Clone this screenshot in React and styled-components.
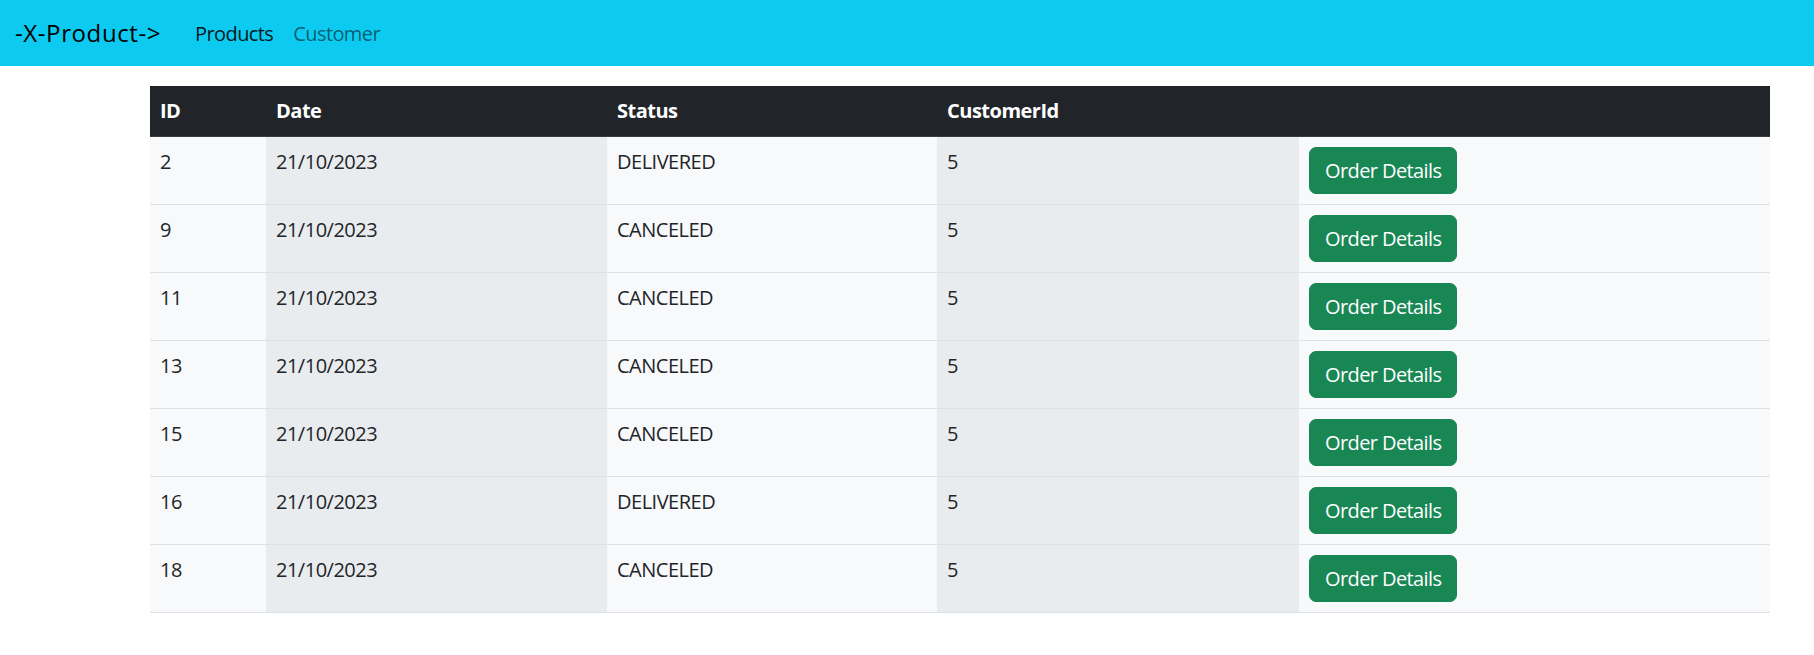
import styled, { createGlobalStyle } from "styled-components";

const GlobalStyle = createGlobalStyle`
  body {
    margin: 0;
    font-family: "Open Sans", "Liberation Sans", sans-serif;
    color: #212529;
    background: #fff;
  }
`;

const NavBar = styled.nav`
  display: flex;
  align-items: center;
  height: 66px;
  padding: 0 15px;
  background: #0dcaf0;
`;

const Brand = styled.a`
  font-size: 24px;
  letter-spacing: 0.6px;
  color: #000;
  margin-right: 24px;
  margin-top: -2px;
  text-decoration: none;
`;

const NavLink = styled.a`
  padding: 0 10px;
  font-size: 20px;
  letter-spacing: -0.6px;
  text-decoration: none;
  color: ${(p) => (p.$active ? "rgba(0, 0, 0, 0.9)" : "rgba(0, 0, 0, 0.55)")};
`;

const Main = styled.main`
  padding: 20px 44px 0 150px;
`;

const Table = styled.table`
  width: 1620px;
  border-collapse: collapse;
  table-layout: fixed;
  font-size: 20px;
  line-height: 30px;
  letter-spacing: -0.5px;
`;

const HeadCell = styled.th`
  background: #212529;
  color: #fff;
  text-align: left;
  font-weight: 700;
  padding: 10px;
  border-bottom: 1px solid #373b3e;
`;

const Row = styled.tr`
  border-bottom: 1px solid #dee2e6;
`;

const Cell = styled.td`
  padding: 10px;
  vertical-align: top;
  background: ${(p) => (p.$dark ? "#e9ecef" : "#f8f9fa")};
`;

const DetailsButton = styled.button`
  font-family: inherit;
  font-size: 20px;
  line-height: 30px;
  letter-spacing: -0.6px;
  padding: 7.5px 15px;
  border: 1px solid #198754;
  border-radius: 7px;
  background: #198754;
  color: #fff;
  cursor: pointer;
`;

const widths = [116, 341, 330, 362, 471];

const orders = [
  { id: 2, status: "DELIVERED" },
  { id: 9, status: "CANCELED" },
  { id: 11, status: "CANCELED" },
  { id: 13, status: "CANCELED" },
  { id: 15, status: "CANCELED" },
  { id: 16, status: "DELIVERED" },
  { id: 18, status: "CANCELED" },
];

export default function App() {
  return (
    <>
      <GlobalStyle />
      <NavBar>
        <Brand href="#">-X-Product-&gt;</Brand>
        <NavLink href="#" $active>
          Products
        </NavLink>
        <NavLink href="#">Customer</NavLink>
      </NavBar>
      <Main>
        <Table>
          <colgroup>
            {widths.map((w, i) => (
              <col key={i} style={{ width: w }} />
            ))}
          </colgroup>
          <thead>
            <tr>
              <HeadCell>ID</HeadCell>
              <HeadCell>Date</HeadCell>
              <HeadCell>Status</HeadCell>
              <HeadCell>CustomerId</HeadCell>
              <HeadCell />
            </tr>
          </thead>
          <tbody>
            {orders.map((o) => (
              <Row key={o.id}>
                <Cell>{o.id}</Cell>
                <Cell $dark>21/10/2023</Cell>
                <Cell>{o.status}</Cell>
                <Cell $dark>5</Cell>
                <Cell>
                  <DetailsButton>Order Details</DetailsButton>
                </Cell>
              </Row>
            ))}
          </tbody>
        </Table>
      </Main>
    </>
  );
}
